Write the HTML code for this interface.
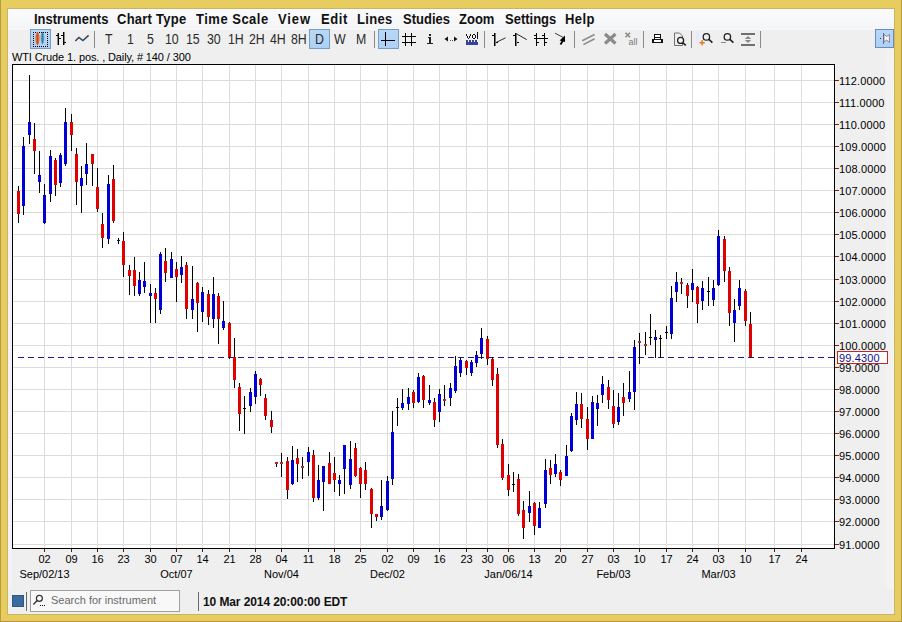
<!DOCTYPE html>
<html><head><meta charset="utf-8"><style>
html,body{margin:0;padding:0;}
body{width:902px;height:622px;overflow:hidden;position:relative;background:#e7cd5f;font-family:"Liberation Sans",sans-serif;}
.frame-in{position:absolute;left:8px;top:9px;width:886px;height:605px;background:#efefef;}
.menubar{position:absolute;left:8px;top:9px;width:886px;height:19px;background:linear-gradient(#fbfbfd,#f4f5f7);border-bottom:2px solid #f7f7f9;}
.menu{position:absolute;top:11px;font-size:13px;font-weight:bold;color:#111;white-space:pre;transform:scaleY(1.1);transform-origin:0 0;}
.tb{position:absolute;top:31px;font-size:13px;color:#2a2a2a;white-space:pre;transform:scale(0.95,1.1);transform-origin:0 0;}
.pl{position:absolute;left:839px;font-size:11px;color:#000;white-space:pre;line-height:13px;letter-spacing:0.15px}
.dl{position:absolute;width:61px;text-align:center;font-size:11px;color:#000;white-space:pre;line-height:13px;}
svg{position:absolute;left:0;top:0;}
</style></head><body>
<div style="position:absolute;left:0;top:0;width:1px;height:622px;background:#b89a40"></div>
<div style="position:absolute;left:901px;top:0;width:1px;height:622px;background:#b89a40"></div>
<div style="position:absolute;left:0;top:621px;width:902px;height:1px;background:#b89440"></div>
<div style="position:absolute;left:7px;top:8px;width:888px;height:607px;background:#c8b462"></div>
<div class="frame-in"></div>
<div style="position:absolute;left:8px;top:49px;width:4px;height:540px;background:#f3f2f6"></div>
<div style="position:absolute;left:884px;top:49px;width:10px;height:540px;background:linear-gradient(90deg,#efefef,#f3f2f4 40%,#f4f4f0)"></div>
<div class="menubar"></div>
<div class="menu" style="left:34px;letter-spacing:0px">Instruments</div><div class="menu" style="left:117px;letter-spacing:0.25px">Chart Type</div><div class="menu" style="left:196px;letter-spacing:0.5px">Time Scale</div><div class="menu" style="left:278px;letter-spacing:0.9px">View</div><div class="menu" style="left:321px;letter-spacing:0.6px">Edit</div><div class="menu" style="left:357px;letter-spacing:0.3px">Lines</div><div class="menu" style="left:403px;letter-spacing:0px">Studies</div><div class="menu" style="left:459px;letter-spacing:0px">Zoom</div><div class="menu" style="left:505px;letter-spacing:0px">Settings</div><div class="menu" style="left:565px;letter-spacing:0.4px">Help</div>
<svg width="902" height="622" shape-rendering="crispEdges">
<defs><linearGradient id="selg" x1="0" y1="0" x2="0" y2="1"><stop offset="0" stop-color="#b8d8f8"/><stop offset="1" stop-color="#acd0f4"/></linearGradient></defs><rect x="12.5" y="64.5" width="822" height="484" fill="#fff" stroke="#000" stroke-width="1"/><line x1="13" y1="80.5" x2="834" y2="80.5" stroke="#dcdcdc"/><line x1="13" y1="102.5" x2="834" y2="102.5" stroke="#dcdcdc"/><line x1="13" y1="124.5" x2="834" y2="124.5" stroke="#dcdcdc"/><line x1="13" y1="146.5" x2="834" y2="146.5" stroke="#dcdcdc"/><line x1="13" y1="168.5" x2="834" y2="168.5" stroke="#dcdcdc"/><line x1="13" y1="190.5" x2="834" y2="190.5" stroke="#dcdcdc"/><line x1="13" y1="212.5" x2="834" y2="212.5" stroke="#dcdcdc"/><line x1="13" y1="234.5" x2="834" y2="234.5" stroke="#dcdcdc"/><line x1="13" y1="256.5" x2="834" y2="256.5" stroke="#dcdcdc"/><line x1="13" y1="279.5" x2="834" y2="279.5" stroke="#dcdcdc"/><line x1="13" y1="301.5" x2="834" y2="301.5" stroke="#dcdcdc"/><line x1="13" y1="323.5" x2="834" y2="323.5" stroke="#dcdcdc"/><line x1="13" y1="345.5" x2="834" y2="345.5" stroke="#dcdcdc"/><line x1="13" y1="367.5" x2="834" y2="367.5" stroke="#dcdcdc"/><line x1="13" y1="389.5" x2="834" y2="389.5" stroke="#dcdcdc"/><line x1="13" y1="411.5" x2="834" y2="411.5" stroke="#dcdcdc"/><line x1="13" y1="433.5" x2="834" y2="433.5" stroke="#dcdcdc"/><line x1="13" y1="455.5" x2="834" y2="455.5" stroke="#dcdcdc"/><line x1="13" y1="477.5" x2="834" y2="477.5" stroke="#dcdcdc"/><line x1="13" y1="499.5" x2="834" y2="499.5" stroke="#dcdcdc"/><line x1="13" y1="521.5" x2="834" y2="521.5" stroke="#dcdcdc"/><line x1="13" y1="544.5" x2="834" y2="544.5" stroke="#dcdcdc"/><line x1="44.5" y1="65" x2="44.5" y2="548" stroke="#dcdcdc"/><line x1="71.5" y1="65" x2="71.5" y2="548" stroke="#dcdcdc"/><line x1="97.5" y1="65" x2="97.5" y2="548" stroke="#dcdcdc"/><line x1="123.5" y1="65" x2="123.5" y2="548" stroke="#dcdcdc"/><line x1="150.5" y1="65" x2="150.5" y2="548" stroke="#dcdcdc"/><line x1="176.5" y1="65" x2="176.5" y2="548" stroke="#dcdcdc"/><line x1="202.5" y1="65" x2="202.5" y2="548" stroke="#dcdcdc"/><line x1="229.5" y1="65" x2="229.5" y2="548" stroke="#dcdcdc"/><line x1="255.5" y1="65" x2="255.5" y2="548" stroke="#dcdcdc"/><line x1="281.5" y1="65" x2="281.5" y2="548" stroke="#dcdcdc"/><line x1="308.5" y1="65" x2="308.5" y2="548" stroke="#dcdcdc"/><line x1="334.5" y1="65" x2="334.5" y2="548" stroke="#dcdcdc"/><line x1="360.5" y1="65" x2="360.5" y2="548" stroke="#dcdcdc"/><line x1="387.5" y1="65" x2="387.5" y2="548" stroke="#dcdcdc"/><line x1="413.5" y1="65" x2="413.5" y2="548" stroke="#dcdcdc"/><line x1="439.5" y1="65" x2="439.5" y2="548" stroke="#dcdcdc"/><line x1="466.5" y1="65" x2="466.5" y2="548" stroke="#dcdcdc"/><line x1="487.5" y1="65" x2="487.5" y2="548" stroke="#dcdcdc"/><line x1="508.5" y1="65" x2="508.5" y2="548" stroke="#dcdcdc"/><line x1="534.5" y1="65" x2="534.5" y2="548" stroke="#dcdcdc"/><line x1="560.5" y1="65" x2="560.5" y2="548" stroke="#dcdcdc"/><line x1="587.5" y1="65" x2="587.5" y2="548" stroke="#dcdcdc"/><line x1="613.5" y1="65" x2="613.5" y2="548" stroke="#dcdcdc"/><line x1="639.5" y1="65" x2="639.5" y2="548" stroke="#dcdcdc"/><line x1="666.5" y1="65" x2="666.5" y2="548" stroke="#dcdcdc"/><line x1="692.5" y1="65" x2="692.5" y2="548" stroke="#dcdcdc"/><line x1="718.5" y1="65" x2="718.5" y2="548" stroke="#dcdcdc"/><line x1="745.5" y1="65" x2="745.5" y2="548" stroke="#dcdcdc"/><line x1="774.5" y1="65" x2="774.5" y2="548" stroke="#dcdcdc"/><line x1="801.5" y1="65" x2="801.5" y2="548" stroke="#dcdcdc"/><line x1="18" y1="357.5" x2="834" y2="357.5" stroke="#1c1c90" stroke-dasharray="6 4"/><rect x="18" y="186" width="1" height="37" fill="#000"/><rect x="17" y="191" width="3" height="23" fill="#e00000"/><rect x="23" y="137" width="1" height="78" fill="#000"/><rect x="22" y="146" width="3" height="60" fill="#0000d6"/><rect x="29" y="75" width="1" height="69" fill="#000"/><rect x="28" y="122" width="3" height="13" fill="#0000d6"/><rect x="34" y="123" width="1" height="51" fill="#000"/><rect x="33" y="139" width="3" height="12" fill="#e00000"/><rect x="39" y="151" width="1" height="42" fill="#000"/><rect x="38" y="175" width="3" height="7" fill="#0000d6"/><rect x="44" y="184" width="1" height="40" fill="#000"/><rect x="43" y="195" width="3" height="28" fill="#0000d6"/><rect x="50" y="150" width="1" height="52" fill="#000"/><rect x="49" y="156" width="3" height="38" fill="#0000d6"/><rect x="55" y="158" width="1" height="38" fill="#000"/><rect x="54" y="160" width="3" height="25" fill="#e00000"/><rect x="60" y="153" width="1" height="34" fill="#000"/><rect x="59" y="155" width="3" height="28" fill="#0000d6"/><rect x="65" y="108" width="1" height="58" fill="#000"/><rect x="64" y="122" width="3" height="42" fill="#0000d6"/><rect x="71" y="114" width="1" height="37" fill="#000"/><rect x="70" y="122" width="3" height="13" fill="#e00000"/><rect x="76" y="148" width="1" height="57" fill="#000"/><rect x="75" y="154" width="3" height="28" fill="#e00000"/><rect x="81" y="166" width="1" height="47" fill="#000"/><rect x="80" y="178" width="3" height="8" fill="#0000d6"/><rect x="86" y="143" width="1" height="42" fill="#000"/><rect x="85" y="164" width="3" height="10" fill="#0000d6"/><rect x="92" y="154" width="1" height="32" fill="#000"/><rect x="91" y="154" width="3" height="10" fill="#e00000"/><rect x="97" y="168" width="1" height="44" fill="#000"/><rect x="96" y="187" width="3" height="22" fill="#e00000"/><rect x="102" y="213" width="1" height="35" fill="#000"/><rect x="101" y="224" width="3" height="14" fill="#e00000"/><rect x="108" y="175" width="1" height="69" fill="#000"/><rect x="107" y="184" width="3" height="55" fill="#0000d6"/><rect x="113" y="165" width="1" height="58" fill="#000"/><rect x="112" y="179" width="3" height="42" fill="#e00000"/><rect x="118" y="238" width="1" height="6" fill="#000"/><rect x="117" y="240" width="3" height="1" fill="#101060"/><rect x="123" y="232" width="1" height="45" fill="#000"/><rect x="122" y="241" width="3" height="24" fill="#e00000"/><rect x="129" y="265" width="1" height="30" fill="#000"/><rect x="128" y="270" width="3" height="6" fill="#e00000"/><rect x="134" y="257" width="1" height="39" fill="#000"/><rect x="133" y="270" width="3" height="16" fill="#e00000"/><rect x="139" y="272" width="1" height="24" fill="#000"/><rect x="138" y="280" width="3" height="14" fill="#0000d6"/><rect x="144" y="262" width="1" height="31" fill="#000"/><rect x="143" y="281" width="3" height="6" fill="#0000d6"/><rect x="150" y="284" width="1" height="39" fill="#000"/><rect x="149" y="293" width="3" height="3" fill="#0000d6"/><rect x="155" y="288" width="1" height="35" fill="#000"/><rect x="154" y="293" width="3" height="6" fill="#e00000"/><rect x="160" y="252" width="1" height="62" fill="#000"/><rect x="159" y="254" width="3" height="56" fill="#0000d6"/><rect x="165" y="248" width="1" height="34" fill="#000"/><rect x="164" y="261" width="3" height="12" fill="#e00000"/><rect x="171" y="252" width="1" height="26" fill="#000"/><rect x="170" y="259" width="3" height="19" fill="#0000d6"/><rect x="176" y="262" width="1" height="40" fill="#000"/><rect x="175" y="269" width="3" height="8" fill="#e00000"/><rect x="181" y="256" width="1" height="27" fill="#000"/><rect x="180" y="267" width="3" height="8" fill="#0000d6"/><rect x="186" y="262" width="1" height="57" fill="#000"/><rect x="185" y="265" width="3" height="44" fill="#e00000"/><rect x="192" y="266" width="1" height="53" fill="#000"/><rect x="191" y="299" width="3" height="11" fill="#0000d6"/><rect x="197" y="282" width="1" height="50" fill="#000"/><rect x="196" y="283" width="3" height="20" fill="#e00000"/><rect x="202" y="287" width="1" height="35" fill="#000"/><rect x="201" y="292" width="3" height="20" fill="#0000d6"/><rect x="208" y="290" width="1" height="35" fill="#000"/><rect x="207" y="294" width="3" height="23" fill="#e00000"/><rect x="213" y="277" width="1" height="51" fill="#000"/><rect x="212" y="294" width="3" height="25" fill="#0000d6"/><rect x="218" y="293" width="1" height="51" fill="#000"/><rect x="217" y="296" width="3" height="23" fill="#e00000"/><rect x="223" y="301" width="1" height="29" fill="#000"/><rect x="222" y="321" width="3" height="7" fill="#0000d6"/><rect x="229" y="322" width="1" height="37" fill="#000"/><rect x="228" y="323" width="3" height="34" fill="#e00000"/><rect x="234" y="338" width="1" height="50" fill="#000"/><rect x="233" y="357" width="3" height="23" fill="#e00000"/><rect x="239" y="383" width="1" height="48" fill="#000"/><rect x="238" y="387" width="3" height="27" fill="#e00000"/><rect x="244" y="396" width="1" height="38" fill="#000"/><rect x="243" y="408" width="3" height="1" fill="#000"/><rect x="250" y="388" width="1" height="24" fill="#000"/><rect x="249" y="392" width="3" height="14" fill="#0000d6"/><rect x="255" y="371" width="1" height="33" fill="#000"/><rect x="254" y="374" width="3" height="23" fill="#0000d6"/><rect x="260" y="378" width="1" height="18" fill="#000"/><rect x="259" y="379" width="3" height="6" fill="#e00000"/><rect x="265" y="394" width="1" height="26" fill="#000"/><rect x="264" y="398" width="3" height="18" fill="#e00000"/><rect x="271" y="411" width="1" height="22" fill="#000"/><rect x="270" y="420" width="3" height="7" fill="#e00000"/><rect x="276" y="462" width="1" height="5" fill="#000"/><rect x="275" y="462" width="3" height="2" fill="#a83030"/><rect x="281" y="453" width="1" height="24" fill="#000"/><rect x="280" y="462" width="3" height="2" fill="#a83030"/><rect x="287" y="457" width="1" height="42" fill="#000"/><rect x="286" y="461" width="3" height="29" fill="#e00000"/><rect x="292" y="446" width="1" height="39" fill="#000"/><rect x="291" y="460" width="3" height="24" fill="#0000d6"/><rect x="297" y="449" width="1" height="33" fill="#000"/><rect x="296" y="458" width="3" height="6" fill="#e00000"/><rect x="302" y="457" width="1" height="22" fill="#000"/><rect x="301" y="466" width="3" height="2" fill="#a83030"/><rect x="308" y="447" width="1" height="29" fill="#000"/><rect x="307" y="452" width="3" height="10" fill="#0000d6"/><rect x="313" y="450" width="1" height="52" fill="#000"/><rect x="312" y="455" width="3" height="43" fill="#e00000"/><rect x="318" y="465" width="1" height="35" fill="#000"/><rect x="317" y="480" width="3" height="18" fill="#0000d6"/><rect x="323" y="466" width="1" height="45" fill="#000"/><rect x="322" y="466" width="3" height="16" fill="#0000d6"/><rect x="329" y="452" width="1" height="32" fill="#000"/><rect x="328" y="463" width="3" height="21" fill="#e00000"/><rect x="334" y="457" width="1" height="35" fill="#000"/><rect x="333" y="473" width="3" height="7" fill="#e00000"/><rect x="339" y="475" width="1" height="21" fill="#000"/><rect x="338" y="480" width="3" height="4" fill="#0000d6"/><rect x="344" y="445" width="1" height="49" fill="#000"/><rect x="343" y="445" width="3" height="24" fill="#0000d6"/><rect x="350" y="441" width="1" height="48" fill="#000"/><rect x="349" y="459" width="3" height="26" fill="#0000d6"/><rect x="355" y="443" width="1" height="34" fill="#000"/><rect x="354" y="448" width="3" height="28" fill="#e00000"/><rect x="360" y="467" width="1" height="31" fill="#000"/><rect x="359" y="468" width="3" height="16" fill="#e00000"/><rect x="365" y="462" width="1" height="28" fill="#000"/><rect x="364" y="470" width="3" height="14" fill="#e00000"/><rect x="371" y="488" width="1" height="40" fill="#000"/><rect x="370" y="489" width="3" height="25" fill="#e00000"/><rect x="376" y="514" width="1" height="7" fill="#000"/><rect x="375" y="514" width="3" height="3" fill="#e00000"/><rect x="381" y="480" width="1" height="40" fill="#000"/><rect x="380" y="506" width="3" height="11" fill="#0000d6"/><rect x="387" y="476" width="1" height="35" fill="#000"/><rect x="386" y="481" width="3" height="29" fill="#0000d6"/><rect x="392" y="411" width="1" height="74" fill="#000"/><rect x="391" y="432" width="3" height="47" fill="#0000d6"/><rect x="397" y="398" width="1" height="28" fill="#000"/><rect x="396" y="407" width="3" height="1" fill="#000"/><rect x="402" y="389" width="1" height="21" fill="#000"/><rect x="401" y="403" width="3" height="5" fill="#0000d6"/><rect x="408" y="388" width="1" height="22" fill="#000"/><rect x="407" y="397" width="3" height="7" fill="#0000d6"/><rect x="413" y="390" width="1" height="18" fill="#000"/><rect x="412" y="392" width="3" height="11" fill="#e00000"/><rect x="418" y="373" width="1" height="30" fill="#000"/><rect x="417" y="377" width="3" height="25" fill="#0000d6"/><rect x="423" y="375" width="1" height="33" fill="#000"/><rect x="422" y="376" width="3" height="24" fill="#e00000"/><rect x="429" y="385" width="1" height="20" fill="#000"/><rect x="428" y="400" width="3" height="3" fill="#0000d6"/><rect x="434" y="398" width="1" height="29" fill="#000"/><rect x="433" y="402" width="3" height="18" fill="#e00000"/><rect x="439" y="389" width="1" height="33" fill="#000"/><rect x="438" y="394" width="3" height="18" fill="#0000d6"/><rect x="444" y="385" width="1" height="21" fill="#000"/><rect x="443" y="399" width="3" height="2" fill="#a83030"/><rect x="450" y="383" width="1" height="23" fill="#000"/><rect x="449" y="388" width="3" height="10" fill="#0000d6"/><rect x="455" y="356" width="1" height="37" fill="#000"/><rect x="454" y="366" width="3" height="25" fill="#0000d6"/><rect x="460" y="358" width="1" height="19" fill="#000"/><rect x="459" y="360" width="3" height="13" fill="#0000d6"/><rect x="466" y="360" width="1" height="15" fill="#000"/><rect x="465" y="361" width="3" height="7" fill="#e00000"/><rect x="471" y="360" width="1" height="16" fill="#000"/><rect x="470" y="362" width="3" height="11" fill="#0000d6"/><rect x="476" y="351" width="1" height="16" fill="#000"/><rect x="475" y="355" width="3" height="8" fill="#0000d6"/><rect x="481" y="328" width="1" height="31" fill="#000"/><rect x="480" y="338" width="3" height="16" fill="#0000d6"/><rect x="487" y="336" width="1" height="29" fill="#000"/><rect x="486" y="339" width="3" height="20" fill="#e00000"/><rect x="492" y="357" width="1" height="29" fill="#000"/><rect x="491" y="359" width="3" height="21" fill="#e00000"/><rect x="497" y="368" width="1" height="80" fill="#000"/><rect x="496" y="374" width="3" height="71" fill="#e00000"/><rect x="502" y="439" width="1" height="41" fill="#000"/><rect x="501" y="444" width="3" height="34" fill="#e00000"/><rect x="508" y="464" width="1" height="32" fill="#000"/><rect x="507" y="475" width="3" height="15" fill="#e00000"/><rect x="513" y="472" width="1" height="20" fill="#000"/><rect x="512" y="484" width="3" height="1" fill="#000"/><rect x="518" y="474" width="1" height="42" fill="#000"/><rect x="517" y="479" width="3" height="35" fill="#e00000"/><rect x="523" y="501" width="1" height="38" fill="#000"/><rect x="522" y="510" width="3" height="18" fill="#e00000"/><rect x="529" y="491" width="1" height="31" fill="#000"/><rect x="528" y="506" width="3" height="7" fill="#0000d6"/><rect x="534" y="502" width="1" height="33" fill="#000"/><rect x="533" y="503" width="3" height="23" fill="#e00000"/><rect x="539" y="502" width="1" height="26" fill="#000"/><rect x="538" y="508" width="3" height="20" fill="#0000d6"/><rect x="545" y="459" width="1" height="49" fill="#000"/><rect x="544" y="470" width="3" height="34" fill="#0000d6"/><rect x="550" y="460" width="1" height="24" fill="#000"/><rect x="549" y="468" width="3" height="7" fill="#e00000"/><rect x="555" y="454" width="1" height="23" fill="#000"/><rect x="554" y="464" width="3" height="10" fill="#0000d6"/><rect x="560" y="470" width="1" height="16" fill="#000"/><rect x="559" y="472" width="3" height="8" fill="#e00000"/><rect x="566" y="445" width="1" height="31" fill="#000"/><rect x="565" y="456" width="3" height="20" fill="#0000d6"/><rect x="571" y="413" width="1" height="39" fill="#000"/><rect x="570" y="416" width="3" height="35" fill="#0000d6"/><rect x="576" y="392" width="1" height="33" fill="#000"/><rect x="575" y="404" width="3" height="16" fill="#0000d6"/><rect x="581" y="393" width="1" height="35" fill="#000"/><rect x="580" y="404" width="3" height="15" fill="#e00000"/><rect x="587" y="407" width="1" height="43" fill="#000"/><rect x="586" y="419" width="3" height="20" fill="#e00000"/><rect x="592" y="396" width="1" height="43" fill="#000"/><rect x="591" y="402" width="3" height="37" fill="#0000d6"/><rect x="597" y="395" width="1" height="31" fill="#000"/><rect x="596" y="403" width="3" height="6" fill="#0000d6"/><rect x="602" y="376" width="1" height="27" fill="#000"/><rect x="601" y="384" width="3" height="11" fill="#0000d6"/><rect x="608" y="380" width="1" height="29" fill="#000"/><rect x="607" y="387" width="3" height="13" fill="#e00000"/><rect x="613" y="390" width="1" height="38" fill="#000"/><rect x="612" y="406" width="3" height="18" fill="#e00000"/><rect x="618" y="393" width="1" height="32" fill="#000"/><rect x="617" y="407" width="3" height="15" fill="#0000d6"/><rect x="623" y="383" width="1" height="33" fill="#000"/><rect x="622" y="397" width="3" height="6" fill="#e00000"/><rect x="629" y="371" width="1" height="31" fill="#000"/><rect x="628" y="392" width="3" height="7" fill="#0000d6"/><rect x="634" y="340" width="1" height="70" fill="#000"/><rect x="633" y="347" width="3" height="45" fill="#0000d6"/><rect x="639" y="333" width="1" height="31" fill="#000"/><rect x="638" y="341" width="3" height="2" fill="#a83030"/><rect x="645" y="332" width="1" height="23" fill="#000"/><rect x="644" y="344" width="3" height="2" fill="#a83030"/><rect x="650" y="314" width="1" height="31" fill="#000"/><rect x="649" y="337" width="3" height="1" fill="#000"/><rect x="655" y="330" width="1" height="28" fill="#000"/><rect x="654" y="337" width="3" height="3" fill="#0000d6"/><rect x="660" y="335" width="1" height="23" fill="#000"/><rect x="659" y="338" width="3" height="1" fill="#000"/><rect x="666" y="326" width="1" height="13" fill="#000"/><rect x="665" y="332" width="3" height="1" fill="#000"/><rect x="671" y="286" width="1" height="53" fill="#000"/><rect x="670" y="298" width="3" height="36" fill="#0000d6"/><rect x="676" y="272" width="1" height="30" fill="#000"/><rect x="675" y="282" width="3" height="10" fill="#0000d6"/><rect x="681" y="278" width="1" height="16" fill="#000"/><rect x="680" y="282" width="3" height="2" fill="#a83030"/><rect x="687" y="283" width="1" height="25" fill="#000"/><rect x="686" y="285" width="3" height="11" fill="#e00000"/><rect x="692" y="269" width="1" height="33" fill="#000"/><rect x="691" y="283" width="3" height="7" fill="#0000d6"/><rect x="697" y="286" width="1" height="37" fill="#000"/><rect x="696" y="287" width="3" height="17" fill="#e00000"/><rect x="702" y="281" width="1" height="29" fill="#000"/><rect x="701" y="288" width="3" height="13" fill="#0000d6"/><rect x="708" y="277" width="1" height="29" fill="#000"/><rect x="707" y="291" width="3" height="1" fill="#000"/><rect x="713" y="280" width="1" height="26" fill="#000"/><rect x="712" y="288" width="3" height="12" fill="#0000d6"/><rect x="718" y="230" width="1" height="56" fill="#000"/><rect x="717" y="236" width="3" height="49" fill="#0000d6"/><rect x="724" y="236" width="1" height="46" fill="#000"/><rect x="723" y="239" width="3" height="32" fill="#e00000"/><rect x="729" y="267" width="1" height="59" fill="#000"/><rect x="728" y="271" width="3" height="42" fill="#e00000"/><rect x="734" y="299" width="1" height="43" fill="#000"/><rect x="733" y="310" width="3" height="13" fill="#0000d6"/><rect x="739" y="280" width="1" height="30" fill="#000"/><rect x="738" y="288" width="3" height="18" fill="#0000d6"/><rect x="745" y="289" width="1" height="37" fill="#000"/><rect x="744" y="291" width="3" height="30" fill="#e00000"/><rect x="750" y="312" width="1" height="46" fill="#000"/><rect x="749" y="324" width="3" height="33" fill="#e00000"/><rect x="835" y="80" width="4" height="1" fill="#7a2020"/><rect x="835" y="102" width="4" height="1" fill="#7a2020"/><rect x="835" y="124" width="4" height="1" fill="#7a2020"/><rect x="835" y="146" width="4" height="1" fill="#7a2020"/><rect x="835" y="168" width="4" height="1" fill="#7a2020"/><rect x="835" y="190" width="4" height="1" fill="#7a2020"/><rect x="835" y="212" width="4" height="1" fill="#7a2020"/><rect x="835" y="234" width="4" height="1" fill="#7a2020"/><rect x="835" y="256" width="4" height="1" fill="#7a2020"/><rect x="835" y="279" width="4" height="1" fill="#7a2020"/><rect x="835" y="301" width="4" height="1" fill="#7a2020"/><rect x="835" y="323" width="4" height="1" fill="#7a2020"/><rect x="835" y="345" width="4" height="1" fill="#7a2020"/><rect x="835" y="367" width="4" height="1" fill="#7a2020"/><rect x="835" y="389" width="4" height="1" fill="#7a2020"/><rect x="835" y="411" width="4" height="1" fill="#7a2020"/><rect x="835" y="433" width="4" height="1" fill="#7a2020"/><rect x="835" y="455" width="4" height="1" fill="#7a2020"/><rect x="835" y="477" width="4" height="1" fill="#7a2020"/><rect x="835" y="499" width="4" height="1" fill="#7a2020"/><rect x="835" y="521" width="4" height="1" fill="#7a2020"/><rect x="835" y="544" width="4" height="1" fill="#7a2020"/><rect x="44" y="549" width="1" height="3" fill="#402020"/><rect x="71" y="549" width="1" height="3" fill="#402020"/><rect x="97" y="549" width="1" height="3" fill="#402020"/><rect x="123" y="549" width="1" height="3" fill="#402020"/><rect x="150" y="549" width="1" height="3" fill="#402020"/><rect x="176" y="549" width="1" height="3" fill="#402020"/><rect x="202" y="549" width="1" height="3" fill="#402020"/><rect x="229" y="549" width="1" height="3" fill="#402020"/><rect x="255" y="549" width="1" height="3" fill="#402020"/><rect x="281" y="549" width="1" height="3" fill="#402020"/><rect x="308" y="549" width="1" height="3" fill="#402020"/><rect x="334" y="549" width="1" height="3" fill="#402020"/><rect x="360" y="549" width="1" height="3" fill="#402020"/><rect x="387" y="549" width="1" height="3" fill="#402020"/><rect x="413" y="549" width="1" height="3" fill="#402020"/><rect x="439" y="549" width="1" height="3" fill="#402020"/><rect x="466" y="549" width="1" height="3" fill="#402020"/><rect x="487" y="549" width="1" height="3" fill="#402020"/><rect x="508" y="549" width="1" height="3" fill="#402020"/><rect x="534" y="549" width="1" height="3" fill="#402020"/><rect x="560" y="549" width="1" height="3" fill="#402020"/><rect x="587" y="549" width="1" height="3" fill="#402020"/><rect x="613" y="549" width="1" height="3" fill="#402020"/><rect x="639" y="549" width="1" height="3" fill="#402020"/><rect x="666" y="549" width="1" height="3" fill="#402020"/><rect x="692" y="549" width="1" height="3" fill="#402020"/><rect x="718" y="549" width="1" height="3" fill="#402020"/><rect x="745" y="549" width="1" height="3" fill="#402020"/><rect x="774" y="549" width="1" height="3" fill="#402020"/><rect x="801" y="549" width="1" height="3" fill="#402020"/><rect x="837.5" y="351.5" width="50" height="12" fill="#fff" stroke="#c02828"/><rect x="30.5" y="29.5" width="20" height="19" fill="url(#selg)" stroke="#7a9cc0"/><rect x="309.5" y="29.5" width="20" height="19" fill="url(#selg)" stroke="#7a9cc0"/><rect x="378.5" y="29.5" width="20" height="19" fill="url(#selg)" stroke="#7a9cc0"/><rect x="875.5" y="29.5" width="18" height="18" fill="url(#selg)" stroke="#6c8cb8"/><rect x="33" y="32" width="1" height="1" fill="#000"/><rect x="33" y="46" width="1" height="1" fill="#000"/><rect x="35" y="32" width="1" height="1" fill="#000"/><rect x="35" y="46" width="1" height="1" fill="#000"/><rect x="37" y="32" width="1" height="1" fill="#000"/><rect x="37" y="46" width="1" height="1" fill="#000"/><rect x="39" y="32" width="1" height="1" fill="#000"/><rect x="39" y="46" width="1" height="1" fill="#000"/><rect x="41" y="32" width="1" height="1" fill="#000"/><rect x="41" y="46" width="1" height="1" fill="#000"/><rect x="43" y="32" width="1" height="1" fill="#000"/><rect x="43" y="46" width="1" height="1" fill="#000"/><rect x="45" y="32" width="1" height="1" fill="#000"/><rect x="45" y="46" width="1" height="1" fill="#000"/><rect x="47" y="32" width="1" height="1" fill="#000"/><rect x="47" y="46" width="1" height="1" fill="#000"/><rect x="33" y="34" width="1" height="1" fill="#000"/><rect x="47" y="34" width="1" height="1" fill="#000"/><rect x="33" y="36" width="1" height="1" fill="#000"/><rect x="47" y="36" width="1" height="1" fill="#000"/><rect x="33" y="38" width="1" height="1" fill="#000"/><rect x="47" y="38" width="1" height="1" fill="#000"/><rect x="33" y="40" width="1" height="1" fill="#000"/><rect x="47" y="40" width="1" height="1" fill="#000"/><rect x="33" y="42" width="1" height="1" fill="#000"/><rect x="47" y="42" width="1" height="1" fill="#000"/><rect x="33" y="44" width="1" height="1" fill="#000"/><rect x="47" y="44" width="1" height="1" fill="#000"/><ellipse cx="37.5" cy="38.5" rx="2" ry="6.2" fill="#f06224" shape-rendering="auto"/><rect x="37" y="32" width="1" height="13" fill="#c05020"/><ellipse cx="42.5" cy="38" rx="1.8" ry="5.3" fill="#5a9cc0" shape-rendering="auto"/><rect x="42" y="32" width="1" height="12" fill="#3a7aa0"/><rect x="58" y="33" width="1" height="12" fill="#000"/><rect x="57" y="33" width="1" height="12" fill="#888"/><rect x="56" y="35" width="2" height="1" fill="#000"/><rect x="59" y="38" width="2" height="1" fill="#000"/><rect x="63" y="32" width="1" height="13" fill="#000"/><rect x="64" y="32" width="1" height="13" fill="#888"/><rect x="61" y="35" width="2" height="1" fill="#000"/><rect x="64" y="42" width="2" height="1" fill="#000"/><polyline points="75.3,41 78.9,37.4 82.9,40.5 88.6,35.4" fill="none" stroke="#34465a" stroke-width="1.5" shape-rendering="auto"/><rect x="94" y="31" width="1" height="17" fill="#8a8a8a"/><rect x="374" y="31" width="1" height="17" fill="#8a8a8a"/><rect x="484" y="31" width="1" height="17" fill="#8a8a8a"/><rect x="574" y="31" width="1" height="17" fill="#8a8a8a"/><rect x="643" y="31" width="1" height="17" fill="#8a8a8a"/><rect x="691" y="31" width="1" height="17" fill="#8a8a8a"/><rect x="760" y="31" width="1" height="17" fill="#8a8a8a"/><rect x="385" y="32" width="1" height="14" fill="#000"/><rect x="381" y="40" width="14" height="1" fill="#000"/><rect x="405" y="33" width="1" height="13" fill="#000"/><rect x="411" y="33" width="1" height="13" fill="#000"/><rect x="402" y="36" width="14" height="1" fill="#000"/><rect x="402" y="42" width="14" height="1" fill="#000"/><rect x="429" y="34" width="2" height="2" fill="#222"/><rect x="429" y="37" width="2" height="7" fill="#222"/><rect x="428" y="37" width="1" height="1" fill="#222"/><rect x="427" y="43" width="6" height="1" fill="#222"/><polygon points="448,36.5 448,41.5 444.5,39" fill="#111" shape-rendering="auto"/><polygon points="454,36.5 454,41.5 457.5,39" fill="#111" shape-rendering="auto"/><rect x="450" y="40" width="1" height="1" fill="#555"/><rect x="452" y="40" width="1" height="1" fill="#555"/><rect x="466" y="34" width="1" height="2" fill="#111"/><rect x="470" y="34" width="1" height="2" fill="#111"/><rect x="467" y="36" width="1" height="2" fill="#111"/><rect x="469" y="36" width="1" height="2" fill="#111"/><rect x="468" y="38" width="1" height="1" fill="#111"/><rect x="473" y="34" width="2" height="1" fill="#111"/><rect x="472" y="35" width="1" height="3" fill="#111"/><rect x="475" y="35" width="1" height="3" fill="#111"/><rect x="473" y="38" width="2" height="1" fill="#111"/><rect x="477" y="32" width="1" height="7" fill="#111"/><rect x="466" y="42" width="12" height="3" fill="#34449c"/><rect x="466" y="40" width="2" height="2" fill="#34449c"/><rect x="469" y="40" width="2" height="2" fill="#34449c"/><rect x="472" y="40" width="2" height="2" fill="#34449c"/><rect x="475" y="40" width="2" height="2" fill="#34449c"/><rect x="494" y="33" width="1" height="13" fill="#000"/><rect x="495" y="33" width="1" height="13" fill="#777"/><rect x="492" y="35" width="2" height="1" fill="#000"/><rect x="496" y="42" width="2" height="1" fill="#000"/><line x1="496.5" y1="42.3" x2="505.5" y2="37.8" stroke="#111" stroke-width="0.9" shape-rendering="auto"/><rect x="515" y="33" width="1" height="13" fill="#000"/><rect x="516" y="33" width="1" height="13" fill="#777"/><rect x="513" y="35" width="2" height="1" fill="#000"/><rect x="517" y="42" width="2" height="1" fill="#000"/><line x1="516.5" y1="33.8" x2="526.7" y2="39.6" stroke="#111" stroke-width="0.9" shape-rendering="auto"/><rect x="536" y="33" width="1" height="13" fill="#000"/><rect x="544" y="33" width="1" height="13" fill="#000"/><rect x="534" y="35" width="2" height="1" fill="#000"/><rect x="542" y="35" width="2" height="1" fill="#000"/><rect x="534" y="38" width="14" height="1" fill="#000"/><rect x="537" y="42" width="2" height="1" fill="#000"/><rect x="545" y="42" width="2" height="1" fill="#000"/><line x1="555" y1="33.2" x2="563.5" y2="37.6" stroke="#111" stroke-width="0.8" shape-rendering="auto"/><line x1="560.5" y1="44.5" x2="563.5" y2="39.5" stroke="#000" stroke-width="1.8" shape-rendering="auto"/><polygon points="564.9,35.6 565.1,42 559.6,40.4" fill="#000" shape-rendering="auto"/><line x1="582.2" y1="40.7" x2="594.6" y2="34.5" stroke="#8c8c8c" stroke-width="1.6" shape-rendering="auto"/><line x1="583.4" y1="44.6" x2="594.6" y2="38.8" stroke="#8c8c8c" stroke-width="1.6" shape-rendering="auto"/><path d="M605,34 L615.5,43.5 M615.5,34 L605,43.5" stroke="#8a8a8a" stroke-width="3.2" shape-rendering="auto"/><path d="M625.5,32.8 L630,37.3 M630,32.8 L625.5,37.3" stroke="#8a8a8a" stroke-width="1.6" shape-rendering="auto"/><text x="628.5" y="45.3" font-family="Liberation Sans" font-size="9" fill="#7a7a7a" textLength="9" lengthAdjust="spacingAndGlyphs" shape-rendering="auto">all</text><rect x="654" y="34" width="7" height="5" fill="#111"/><rect x="655" y="35" width="5" height="2" fill="#fff"/><rect x="655" y="38" width="5" height="1" fill="#fff"/><rect x="652" y="39" width="11" height="4" fill="#111"/><rect x="654" y="40" width="7" height="2" fill="#fff"/><path d="M674.5,33 L679.5,33 L682.5,36 L682.5,45.5 L674.5,45.5 Z" fill="none" stroke="#707070" stroke-width="1" shape-rendering="auto"/><circle cx="680.6" cy="40.4" r="3" fill="#f4f4f4" stroke="#222" stroke-width="1.3" shape-rendering="auto"/><line x1="682.6" y1="42.6" x2="685.8" y2="45.4" stroke="#222" stroke-width="1.6" shape-rendering="auto"/><circle cx="706.4" cy="36.9" r="3.2" fill="none" stroke="#222" stroke-width="1.3" shape-rendering="auto"/><line x1="708.6" y1="39.1" x2="712.4" y2="42.6" stroke="#222" stroke-width="1.6" shape-rendering="auto"/><path d="M699.4,42.7 L704.8,42.7 M702.1,40 L702.1,45.4" stroke="#e8781e" stroke-width="1.4" shape-rendering="auto"/><rect x="696" y="31" width="3" height="14" fill="#dfe8f8" opacity="0.6"/><circle cx="727.4" cy="36.9" r="3.2" fill="none" stroke="#222" stroke-width="1.3" shape-rendering="auto"/><line x1="729.6" y1="39.1" x2="733.4" y2="42.6" stroke="#222" stroke-width="1.6" shape-rendering="auto"/><rect x="721" y="42" width="5" height="1" fill="#8a8a8a"/><rect x="741" y="33" width="14" height="1.5" fill="#707070"/><rect x="741" y="44" width="14" height="1.5" fill="#707070"/><polygon points="744.8,38.9 751.2,38.9 748,35.9" fill="#8a8a8a" shape-rendering="auto"/><polygon points="744.8,40.1 751.2,40.1 748,43.1" fill="#8a8a8a" shape-rendering="auto"/><rect x="880" y="38" width="1" height="1" fill="#334"/><rect x="883" y="33" width="1" height="11" fill="#6a6a8a"/><path d="M884,34.2 L886.6,36.6 L889.4,34.6 L889.4,42.4 L886.6,40 L884,42 Z" fill="#f8f8f8" stroke="#7a6a8a" stroke-width="0.8" shape-rendering="auto"/><rect x="12" y="595" width="12" height="12" fill="#3b6a9e"/><rect x="12.5" y="595.5" width="11" height="11" fill="none" stroke="#2c5686" stroke-width="1"/><rect x="26" y="592" width="1" height="19" fill="#6a6a6a"/><rect x="198" y="592" width="1" height="19" fill="#6a6a6a"/><rect x="30.5" y="590.5" width="149" height="21" fill="#f8f8f8" stroke="#a0a0a0"/><circle cx="39.4" cy="598.3" r="3" fill="none" stroke="#333" stroke-width="1.2" shape-rendering="auto"/><line x1="37.2" y1="600.5" x2="33.4" y2="604.4" stroke="#333" stroke-width="1.4" shape-rendering="auto"/><rect x="40" y="605" width="1" height="1" fill="#111"/><rect x="42" y="605" width="1" height="1" fill="#111"/><rect x="44" y="605" width="1" height="1" fill="#111"/>
</svg>
<div class="tb" style="left:105px">T</div><div class="tb" style="left:127px">1</div><div class="tb" style="left:147px">5</div><div class="tb" style="left:165px">10</div><div class="tb" style="left:186px">15</div><div class="tb" style="left:207px">30</div><div class="tb" style="left:228px">1H</div><div class="tb" style="left:249px">2H</div><div class="tb" style="left:270px">4H</div><div class="tb" style="left:291px">8H</div><div class="tb" style="left:315px">D</div><div class="tb" style="left:334px">W</div><div class="tb" style="left:356px">M</div>
<div style="position:absolute;left:12px;top:51px;font-size:11px;color:#000;white-space:pre;letter-spacing:-0.12px">WTI Crude 1. pos. , Daily, # 140 / 300</div>
<div class="pl" style="top:75px">112.0000</div><div class="pl" style="top:97px">111.0000</div><div class="pl" style="top:119px">110.0000</div><div class="pl" style="top:141px">109.0000</div><div class="pl" style="top:163px">108.0000</div><div class="pl" style="top:185px">107.0000</div><div class="pl" style="top:207px">106.0000</div><div class="pl" style="top:229px">105.0000</div><div class="pl" style="top:251px">104.0000</div><div class="pl" style="top:274px">103.0000</div><div class="pl" style="top:296px">102.0000</div><div class="pl" style="top:318px">101.0000</div><div class="pl" style="top:340px">100.0000</div><div class="pl" style="top:362px">99.0000</div><div class="pl" style="top:384px">98.0000</div><div class="pl" style="top:406px">97.0000</div><div class="pl" style="top:428px">96.0000</div><div class="pl" style="top:450px">95.0000</div><div class="pl" style="top:472px">94.0000</div><div class="pl" style="top:494px">93.0000</div><div class="pl" style="top:516px">92.0000</div><div class="pl" style="top:539px">91.0000</div><div class="pl" style="top:352px;color:#101088">99.4300</div><div class="dl" style="left:14px;top:553px">02</div><div class="dl" style="left:14px;top:568px">Sep/02/13</div><div class="dl" style="left:41px;top:553px">09</div><div class="dl" style="left:67px;top:553px">16</div><div class="dl" style="left:93px;top:553px">23</div><div class="dl" style="left:120px;top:553px">30</div><div class="dl" style="left:146px;top:553px">07</div><div class="dl" style="left:146px;top:568px">Oct/07</div><div class="dl" style="left:172px;top:553px">14</div><div class="dl" style="left:199px;top:553px">21</div><div class="dl" style="left:225px;top:553px">28</div><div class="dl" style="left:251px;top:553px">04</div><div class="dl" style="left:251px;top:568px">Nov/04</div><div class="dl" style="left:278px;top:553px">11</div><div class="dl" style="left:304px;top:553px">18</div><div class="dl" style="left:330px;top:553px">25</div><div class="dl" style="left:357px;top:553px">02</div><div class="dl" style="left:357px;top:568px">Dec/02</div><div class="dl" style="left:383px;top:553px">09</div><div class="dl" style="left:409px;top:553px">16</div><div class="dl" style="left:436px;top:553px">23</div><div class="dl" style="left:457px;top:553px">30</div><div class="dl" style="left:478px;top:553px">06</div><div class="dl" style="left:478px;top:568px">Jan/06/14</div><div class="dl" style="left:504px;top:553px">13</div><div class="dl" style="left:530px;top:553px">20</div><div class="dl" style="left:557px;top:553px">27</div><div class="dl" style="left:583px;top:553px">03</div><div class="dl" style="left:583px;top:568px">Feb/03</div><div class="dl" style="left:609px;top:553px">10</div><div class="dl" style="left:636px;top:553px">17</div><div class="dl" style="left:662px;top:553px">24</div><div class="dl" style="left:688px;top:553px">03</div><div class="dl" style="left:688px;top:568px">Mar/03</div><div class="dl" style="left:715px;top:553px">10</div><div class="dl" style="left:744px;top:553px">17</div><div class="dl" style="left:771px;top:553px">24</div>
<div style="position:absolute;left:203px;top:595px;font-size:12px;font-weight:bold;color:#111;white-space:pre;letter-spacing:-0.1px">10 Mar 2014 20:00:00 EDT</div>
<div style="position:absolute;left:51px;top:594px;font-size:11px;color:#6a6a6a;white-space:pre">Search for instrument</div>
</body></html>
